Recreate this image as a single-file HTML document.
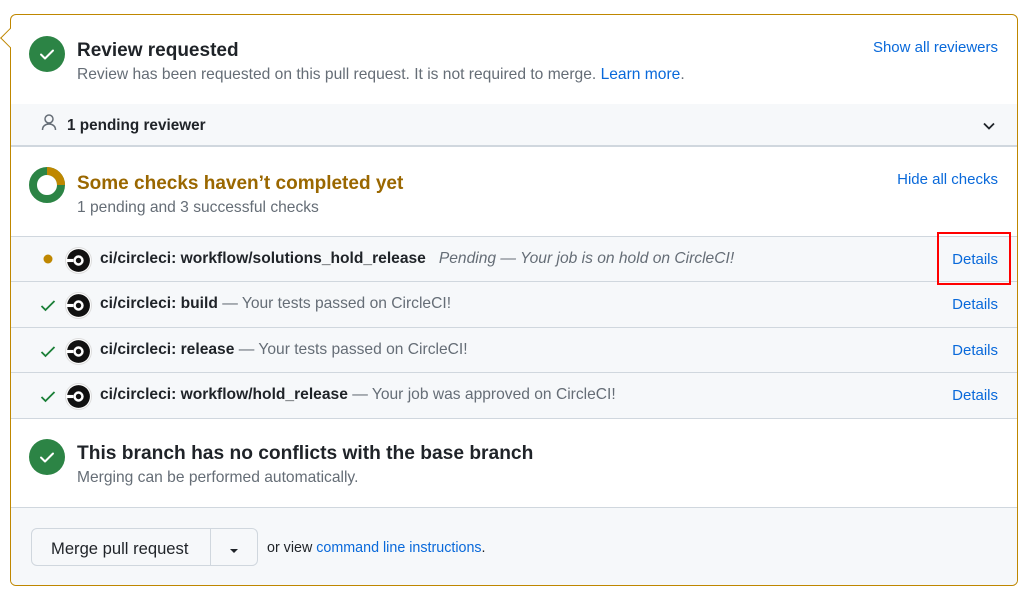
<!DOCTYPE html>
<html><head><meta charset="utf-8"><style>
*{box-sizing:border-box;margin:0;padding:0}
body{width:1034px;height:604px;background:#fff;font-family:"Liberation Sans",sans-serif;color:#1f2328;position:relative;overflow:hidden}
.box{position:absolute;left:10px;top:14px;width:1008px;height:572px;border:1px solid #bf8700;border-radius:6px;overflow:hidden;background:#fff}
.arrow{position:absolute;left:3px;top:31px;width:14px;height:14px;background:#fff;border-left:1px solid #bf8700;border-bottom:1px solid #bf8700;transform:rotate(45deg);z-index:2}
.abs{position:absolute}
.t{font-size:19px;font-weight:bold;white-space:nowrap}
.s{font-size:15.6px;color:#656d76;white-space:nowrap}
a{color:#0969da;text-decoration:none}
.lnk{font-size:15px;color:#0969da;white-space:nowrap}
.row{position:absolute;left:0;width:1006px;height:46px;background:#f6f8fa;border-top:1px solid #d0d7de}
.row .n{position:absolute;left:89px;top:13px;font-size:15.6px;white-space:nowrap}
.row .n b{color:#1f2328}
.row .n span{color:#656d76}
.row .d{position:absolute;right:19px;top:14px;font-size:15px;color:#0969da}
.logo{position:absolute;left:54px;top:10px;width:27px;height:27px}
.chk{position:absolute;left:29px;top:15px}
</style></head><body>
<div class="arrow"></div>
<div class="box">
  <svg class="abs" style="left:18px;top:21px" width="36" height="36" viewBox="0 0 36 36"><circle cx="18" cy="18" r="18" fill="#2c8445"/><path d="M12 18.5l4 4 8-8" stroke="#fff" stroke-width="2" fill="none" stroke-linecap="round" stroke-linejoin="round"/></svg>
  <div class="abs t" style="left:66px;top:25px">Review requested</div>
  <div class="abs s" style="left:66px;top:51px">Review has been requested on this pull request. It is not required to merge. <a>Learn more</a>.</div>
  <div class="abs lnk" style="right:19px;top:24px">Show all reviewers</div>
  <div class="abs" style="left:0;top:89px;width:1006px;height:43px;background:#f6f8fa;border-bottom:2px solid #d0d7de"></div>
  <svg class="abs" style="left:30px;top:99px" width="16" height="17" viewBox="0 0 16 17"><circle cx="8" cy="5" r="4" stroke="#656d76" stroke-width="1.5" fill="none"/><path d="M1.5 16c0-4 3-6 6.5-6s6.5 2 6.5 6" stroke="#656d76" stroke-width="1.5" fill="none"/></svg>
  <div class="abs" style="left:56px;top:102px;font-size:15.3px;font-weight:bold">1 pending reviewer</div>
  <svg class="abs" style="left:971px;top:106px" width="14" height="10" viewBox="0 0 14 10"><path d="M2 2.5l5 5 5-5" stroke="#1f2328" stroke-width="1.8" fill="none"/></svg>
  <svg class="abs" style="left:18px;top:152px" width="36" height="36" viewBox="0 0 36 36"><circle cx="18" cy="18" r="14" fill="none" stroke="#2c8445" stroke-width="8"/><path d="M18 4 A14 14 0 0 1 32 18" fill="none" stroke="#bf8700" stroke-width="8"/></svg>
  <div class="abs t" style="left:66px;top:158px;color:#9a6700">Some checks haven’t completed yet</div>
  <div class="abs s" style="left:66px;top:184px">1 pending and 3 successful checks</div>
  <div class="abs lnk" style="right:19px;top:156px">Hide all checks</div>
  <div class="row" style="top:221px">
    <svg class="chk" style="left:32px;top:17px" width="10" height="10"><circle cx="5" cy="5" r="4.5" fill="#bf8700"/></svg>
    <svg class="logo" viewBox="0 0 26 26"><circle cx="13" cy="13" r="12.5" fill="#fff" stroke="#ddd"/><circle cx="13" cy="13" r="11" fill="#111"/><circle cx="13" cy="13" r="5" fill="#fff"/><circle cx="13" cy="13" r="2.6" fill="#111"/><rect x="1.5" y="11.5" width="6.5" height="3" fill="#fff"/></svg>
    <div class="n"><b>ci/circleci: workflow/solutions_hold_release</b> &nbsp;&nbsp;<span style="font-style:italic">Pending — Your job is on hold on CircleCI!</span></div>
    <div class="d">Details</div>
  </div>
  <div class="row" style="top:266px">
    <svg class="chk" style="left:29px;top:18px" width="16" height="12" viewBox="0 0 16 12"><path d="M1.5 6l4 4 9-9" stroke="#1a7f37" stroke-width="1.8" fill="none"/></svg>
    <svg class="logo" viewBox="0 0 26 26"><circle cx="13" cy="13" r="12.5" fill="#fff" stroke="#ddd"/><circle cx="13" cy="13" r="11" fill="#111"/><circle cx="13" cy="13" r="5" fill="#fff"/><circle cx="13" cy="13" r="2.6" fill="#111"/><rect x="1.5" y="11.5" width="6.5" height="3" fill="#fff"/></svg>
    <div class="n"><b>ci/circleci: build</b> <span>— Your tests passed on CircleCI!</span></div>
    <div class="d">Details</div>
  </div>
  <div class="row" style="top:312px">
    <svg class="chk" style="left:29px;top:18px" width="16" height="12" viewBox="0 0 16 12"><path d="M1.5 6l4 4 9-9" stroke="#1a7f37" stroke-width="1.8" fill="none"/></svg>
    <svg class="logo" viewBox="0 0 26 26"><circle cx="13" cy="13" r="12.5" fill="#fff" stroke="#ddd"/><circle cx="13" cy="13" r="11" fill="#111"/><circle cx="13" cy="13" r="5" fill="#fff"/><circle cx="13" cy="13" r="2.6" fill="#111"/><rect x="1.5" y="11.5" width="6.5" height="3" fill="#fff"/></svg>
    <div class="n"><b>ci/circleci: release</b> <span>— Your tests passed on CircleCI!</span></div>
    <div class="d">Details</div>
  </div>
  <div class="row" style="top:357px;height:47px;border-bottom:1px solid #d0d7de">
    <svg class="chk" style="left:29px;top:18px" width="16" height="12" viewBox="0 0 16 12"><path d="M1.5 6l4 4 9-9" stroke="#1a7f37" stroke-width="1.8" fill="none"/></svg>
    <svg class="logo" viewBox="0 0 26 26"><circle cx="13" cy="13" r="12.5" fill="#fff" stroke="#ddd"/><circle cx="13" cy="13" r="11" fill="#111"/><circle cx="13" cy="13" r="5" fill="#fff"/><circle cx="13" cy="13" r="2.6" fill="#111"/><rect x="1.5" y="11.5" width="6.5" height="3" fill="#fff"/></svg>
    <div class="n"><b>ci/circleci: workflow/hold_release</b> <span>— Your job was approved on CircleCI!</span></div>
    <div class="d">Details</div>
  </div>
  <svg class="abs" style="left:18px;top:424px" width="36" height="36" viewBox="0 0 36 36"><circle cx="18" cy="18" r="18" fill="#2c8445"/><path d="M12 18.5l4 4 8-8" stroke="#fff" stroke-width="2" fill="none" stroke-linecap="round" stroke-linejoin="round"/></svg>
  <div class="abs t" style="left:66px;top:428px;font-size:19.2px">This branch has no conflicts with the base branch</div>
  <div class="abs s" style="left:66px;top:454px">Merging can be performed automatically.</div>
  <div class="abs" style="left:0;top:492px;width:1006px;height:80px;background:#f6f8fa;border-top:1px solid #d0d7de"></div>
  <div class="abs" style="left:20px;top:513px;width:227px;height:38px;border:1px solid #d0d7de;border-radius:6px;background:#f6f8fa"></div>
  <div class="abs" style="left:199px;top:513px;width:1px;height:38px;background:#d0d7de"></div>
  <div class="abs" style="left:40px;top:524px;font-size:16.6px">Merge pull request</div>
  <svg class="abs" style="left:218px;top:533px" width="10" height="6"><path d="M1 1h8L5 5z" fill="#1f2328"/></svg>
  <div class="abs" style="left:256px;top:525px;font-size:14.3px;white-space:nowrap">or view <a>command line instructions</a>.</div>
</div>
<div class="abs" style="left:937px;top:232px;width:74px;height:53px;border:2px solid #f00;z-index:5"></div>
</body></html>
